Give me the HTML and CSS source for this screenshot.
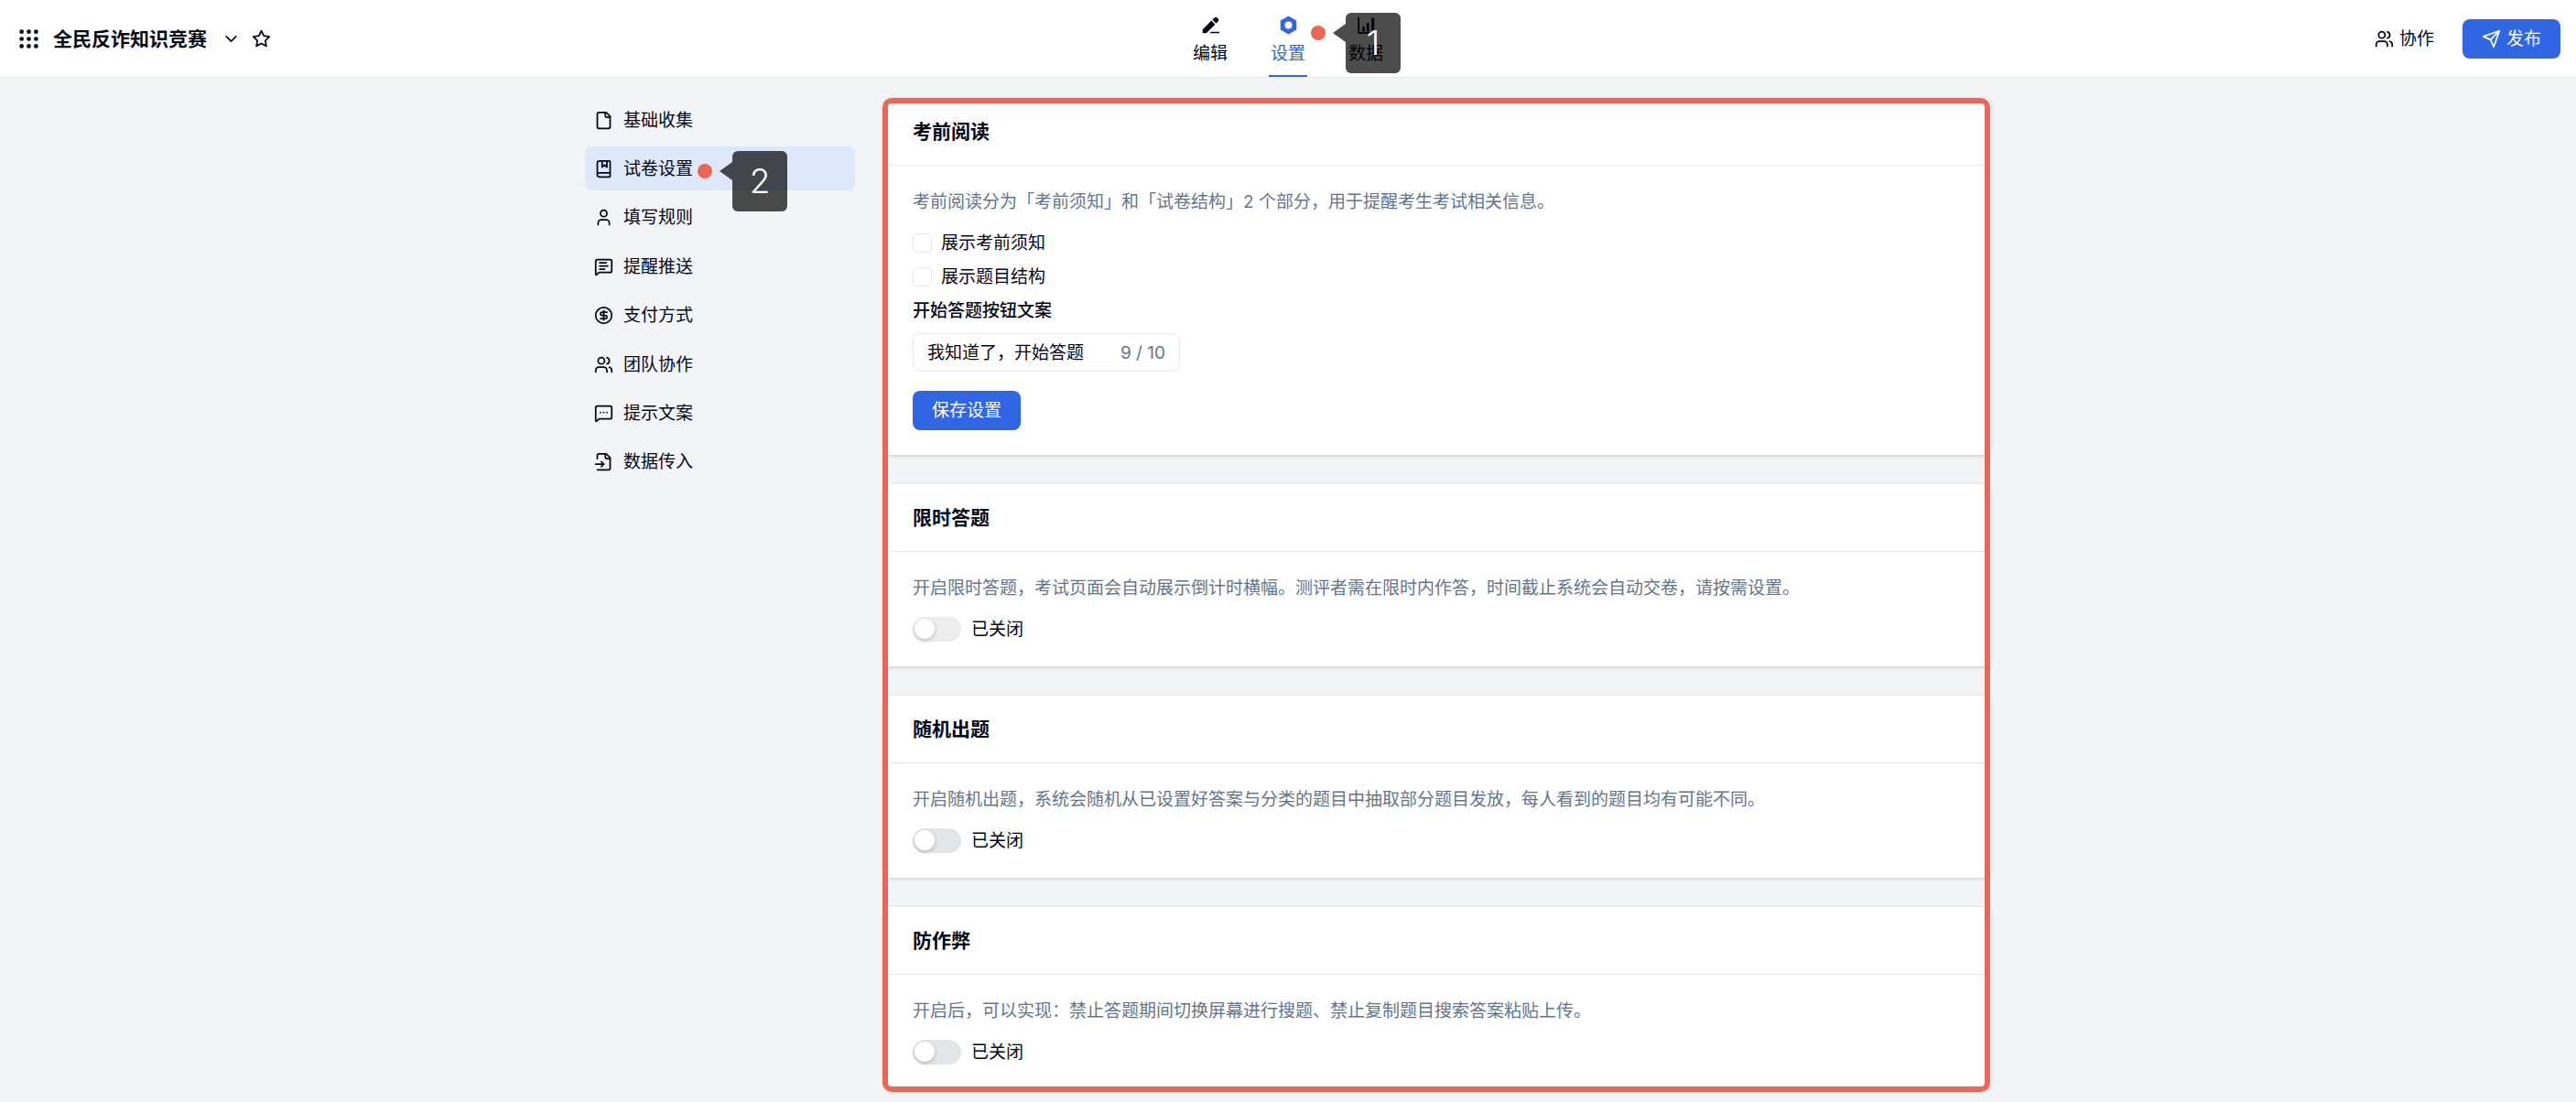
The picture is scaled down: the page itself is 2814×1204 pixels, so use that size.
FILE: index.html
```html
<!DOCTYPE html>
<html lang="zh-CN">
<head>
    <meta charset="UTF-8">
    <meta name="viewport" content="width=device-width, initial-scale=1.0">
    <title>全民反诈知识竞赛</title>
    <link rel="stylesheet" href="styles.css">
</head>
<body>
    <header class="topbar">
        <div class="form-info">
            <button class="icon-btn" type="button" aria-label="应用">
                <svg class="icon dots" viewBox="0 0 24 24">
                    <circle cx="3" cy="3" r="2.7"/><circle cx="12" cy="3" r="2.7"/><circle cx="21" cy="3" r="2.7"/>
                    <circle cx="3" cy="12" r="2.7"/><circle cx="12" cy="12" r="2.7"/><circle cx="21" cy="12" r="2.7"/>
                    <circle cx="3" cy="21" r="2.7"/><circle cx="12" cy="21" r="2.7"/><circle cx="21" cy="21" r="2.7"/>
                </svg>
            </button>
            <h1>全民反诈知识竞赛</h1>
            <button class="icon-btn" type="button" aria-label="展开">
                <svg class="icon" viewBox="0 0 24 24"><path d="m6 9 6 6 6-6"/></svg>
            </button>
            <button class="icon-btn" type="button" aria-label="收藏">
                <svg class="icon" viewBox="0 0 24 24"><path d="M12 2l3.09 6.26L22 9.27l-5 4.87 1.18 6.88L12 17.77l-6.18 3.25L7 14.14 2 9.27l6.91-1.01L12 2z"/></svg>
            </button>
        </div>

        <nav class="tabs">
            <a href="#edit" class="tab">
                <svg class="icon solid" viewBox="0 0 24 24">
                    <path d="M2 22v-4.6L13 6.4l4.6 4.6L6.6 22zM14.2 5.2l2.4-2.4a2.6 2.6 0 0 1 3.7 0l.9.9a2.6 2.6 0 0 1 0 3.7l-2.4 2.4zM12.5 20.2H23V22H10.7z"/>
                </svg>
                <span>编辑</span>
            </a>
            <a href="#settings" class="tab active">
                <svg class="icon solid" viewBox="0 0 24 24">
                    <path fill-rule="evenodd" d="M12 .6l10 5.7v11.4l-10 5.7-10-5.7V6.3zM12 7.4a4.6 4.6 0 1 0 0 9.2 4.6 4.6 0 0 0 0-9.2z"/>
                </svg>
                <span>设置</span>
                <span class="marker">
                    <span class="marker-dot"></span>
                    <span class="marker-label">1</span>
                </span>
            </a>
            <a href="#data" class="tab">
                <svg class="icon solid" viewBox="0 0 24 24">
                    <path d="M1.5 2h2v18.5H22v2H1.5zM7 14h3v6H7zM12.5 9h3v11h-3zM18.5 3h3.5v17h-3.5z"/>
                </svg>
                <span>数据</span>
            </a>
        </nav>

        <div class="actions">
            <button class="btn plain" type="button">
                <svg class="icon" viewBox="0 0 24 24"><path d="M16 21v-2a4 4 0 0 0-4-4H6a4 4 0 0 0-4 4v2"/><path d="M16 3.13a4 4 0 0 1 0 7.74"/><path d="M22 21v-2a4 4 0 0 0-3-3.87"/><circle cx="9" cy="7" r="4"/></svg>
                协作
            </button>
            <button class="btn primary" type="button">
                <svg class="icon" viewBox="0 0 24 24"><path d="m22 2-7 20-4-9-9-4Z"/><path d="M22 2 11 13"/></svg>
                发布
            </button>
        </div>
    </header>

    <main class="page">
        <aside>
            <nav class="side-menu">
                <a href="#basic">
                    <svg class="icon" viewBox="0 0 24 24"><path d="M15 2H6a2 2 0 0 0-2 2v16a2 2 0 0 0 2 2h12a2 2 0 0 0 2-2V7Z"/><path d="M14 2v4a2 2 0 0 0 2 2h4"/></svg>
                    <span>基础收集</span>
                </a>
                <a href="#exam" class="current">
                    <svg class="icon" viewBox="0 0 24 24"><path d="M10 2v8l3-3 3 3V2"/><path d="M4 19.5v-15A2.5 2.5 0 0 1 6.5 2H19a1 1 0 0 1 1 1v18a1 1 0 0 1-1 1H6.5a1 1 0 0 1 0-5H20"/></svg>
                    <span>试卷设置</span>
                    <span class="marker">
                        <span class="marker-dot"></span>
                        <span class="marker-label">2</span>
                    </span>
                </a>
                <a href="#rules">
                    <svg class="icon" viewBox="0 0 24 24"><path d="M19 21v-2a4 4 0 0 0-4-4H9a4 4 0 0 0-4 4v2"/><circle cx="12" cy="7" r="4"/></svg>
                    <span>填写规则</span>
                </a>
                <a href="#push">
                    <svg class="icon" viewBox="0 0 24 24"><path d="M22 17a2 2 0 0 1-2 2H6.83a2 2 0 0 0-1.42.59l-2.2 2.2A.71.71 0 0 1 2 21.29V5a2 2 0 0 1 2-2h16a2 2 0 0 1 2 2z"/><path d="M7 11h10M7 15h6M7 7h8"/></svg>
                    <span>提醒推送</span>
                </a>
                <a href="#pay">
                    <svg class="icon" viewBox="0 0 24 24"><circle cx="12" cy="12" r="10"/><path d="M16 8h-6a2 2 0 1 0 0 4h4a2 2 0 1 1 0 4H8"/><path d="M12 18V6"/></svg>
                    <span>支付方式</span>
                </a>
                <a href="#team">
                    <svg class="icon" viewBox="0 0 24 24"><path d="M16 21v-2a4 4 0 0 0-4-4H6a4 4 0 0 0-4 4v2"/><path d="M16 3.13a4 4 0 0 1 0 7.74"/><path d="M22 21v-2a4 4 0 0 0-3-3.87"/><circle cx="9" cy="7" r="4"/></svg>
                    <span>团队协作</span>
                </a>
                <a href="#tips">
                    <svg class="icon" viewBox="0 0 24 24"><path d="M22 17a2 2 0 0 1-2 2H6.83a2 2 0 0 0-1.42.59l-2.2 2.2A.71.71 0 0 1 2 21.29V5a2 2 0 0 1 2-2h16a2 2 0 0 1 2 2z"/><path d="M8 11h.01M12 11h.01M16 11h.01"/></svg>
                    <span>提示文案</span>
                </a>
                <a href="#import">
                    <svg class="icon" viewBox="0 0 24 24"><path d="M4 22h14a2 2 0 0 0 2-2V7l-5-5H6a2 2 0 0 0-2 2v4"/><path d="M14 2v4a2 2 0 0 0 2 2h4"/><path d="M2 15h10"/><path d="m9 18 3-3-3-3"/></svg>
                    <span>数据传入</span>
                </a>
            </nav>
        </aside>

        <div class="cards">
            <section class="card">
                <h2>考前阅读</h2>
                <form class="card-body">
                    <p>考前阅读分为「考前须知」和「试卷结构」2 个部分，用于提醒考生考试相关信息。</p>
                    <label class="check"><input type="checkbox">展示考前须知</label>
                    <label class="check"><input type="checkbox">展示题目结构</label>
                    <label class="field-label" for="startText">开始答题按钮文案</label>
                    <div class="text-field">
                        <input type="text" id="startText" maxlength="10" value="我知道了，开始答题">
                        <span>9 / 10</span>
                    </div>
                    <button class="btn primary" type="button">保存设置</button>
                </form>
            </section>

            <section class="card">
                <h2>限时答题</h2>
                <div class="card-body">
                    <p>开启限时答题，考试页面会自动展示倒计时横幅。测评者需在限时内作答，时间截止系统会自动交卷，请按需设置。</p>
                    <label class="switch light"><input type="checkbox" role="switch">已关闭</label>
                </div>
            </section>

            <section class="card">
                <h2>随机出题</h2>
                <div class="card-body">
                    <p>开启随机出题，系统会随机从已设置好答案与分类的题目中抽取部分题目发放，每人看到的题目均有可能不同。</p>
                    <label class="switch"><input type="checkbox" role="switch">已关闭</label>
                </div>
            </section>

            <section class="card">
                <h2>防作弊</h2>
                <div class="card-body">
                    <p>开启后，可以实现：禁止答题期间切换屏幕进行搜题、禁止复制题目搜索答案粘贴上传。</p>
                    <label class="switch"><input type="checkbox" role="switch">已关闭</label>
                </div>
            </section>

            <div class="highlight-frame"></div>
        </div>
    </main>
</body>
</html>
```

FILE: styles.css
```css
* {
    box-sizing: border-box;
}

body {
    margin: 0;
    background: #f2f4f6;
    color: #020617;
    font-family: Inter, "Noto Sans CJK SC", sans-serif;
    font-size: 19px;
    line-height: 27px;
}

a {
    color: inherit;
    text-decoration: none;
}

h1, h2, p {
    margin: 0;
}

h1, h2 {
    font-size: 21px;
    font-weight: 600;
}

button, input {
    font: inherit;
    color: inherit;
}

.icon {
    width: 21px;
    height: 21px;
    flex: none;
    fill: none;
    stroke: currentColor;
    stroke-width: 2;
    stroke-linecap: round;
    stroke-linejoin: round;
}

.icon.solid, .icon.dots {
    fill: currentColor;
    stroke: none;
}

.icon.dots {
    overflow: visible;
}

/* Top bar */
.topbar {
    display: grid;
    grid-template-columns: 1fr auto 1fr;
    height: 85px;
    padding: 0 17px;
    background: #fff;
    border-bottom: 1px solid #e5e7eb;
}

.form-info {
    display: flex;
    align-items: center;
    gap: 12px;
    padding-left: 4px;
}

.form-info h1 {
    margin: 0 4px;
}

.icon-btn {
    display: flex;
    padding: 0;
    border: 0;
    background: none;
}

.tabs {
    display: flex;
    gap: 43px;
}

.tab {
    position: relative;
    display: flex;
    flex-direction: column;
    align-items: center;
    gap: 7px;
    width: 42px;
    padding-top: 17px;
    white-space: nowrap;
}

.tab.active {
    color: #3066e4;
    border-bottom: 2px solid #3066e4;
}

.actions {
    display: flex;
    align-items: center;
    justify-content: flex-end;
    gap: 16px;
}

.btn {
    display: flex;
    align-items: center;
    gap: 6px;
    height: 43px;
    padding: 0 21px;
    border: 0;
    border-radius: 8px;
}

.btn.plain {
    padding: 0 15px;
    background: none;
}

.btn.primary {
    background: #3066e4;
    color: #fff;
}

/* Numbered guide markers, drawn over the page */
.marker {
    position: absolute;
    z-index: 2;
    display: flex;
    gap: 22px;
    color: #fff;
}

.tab .marker {
    top: 14px;
    left: 46px;
}

.side-menu .marker {
    top: 5px;
    left: 123px;
}

.marker-dot {
    width: 16px;
    height: 16px;
    margin-top: 14px;
    border-radius: 50%;
    background: #ea6757;
}

.marker-label {
    position: relative;
    width: 60px;
    border-radius: 6px;
    background: rgba(0, 0, 0, 0.7);
    font-size: 37px;
    font-weight: 300;
    line-height: 66px;
    text-align: center;
}

.marker-label::before {
    content: "";
    position: absolute;
    top: 12px;
    right: 100%;
    border: 10px solid transparent;
    border-left-width: 0;
    border-right: 14px solid rgba(0, 0, 0, 0.7);
}

/* Layout */
.page {
    display: grid;
    grid-template-columns: 295px 1fr;
    gap: 31px;
    max-width: 1536px;
    margin: 0 auto;
    padding: 22px 0 8px;
}

.side-menu {
    display: flex;
    flex-direction: column;
    justify-content: space-between;
    min-height: 422px;
}

.side-menu a {
    position: relative;
    display: flex;
    align-items: center;
    gap: 11px;
    height: 48px;
    padding: 0 10px;
    border-radius: 8px;
}

.side-menu .current {
    background: #dde8fb;
}

/* Cards */
.cards {
    position: relative;
    display: flex;
    flex-direction: column;
    gap: 32px;
}

.card {
    border-radius: 8px;
    background: #fff;
    box-shadow: 0 1px 4px rgba(0, 0, 0, 0.18);
}

.card h2 {
    padding: 23px 32px;
    border-bottom: 1px solid #e5e7eb;
}

.card-body {
    display: flex;
    flex-direction: column;
    align-items: flex-start;
    padding: 26px 32px 27px;
}

.card-body p {
    margin-bottom: 18px;
    color: #64748b;
}

.check {
    display: flex;
    align-items: center;
    gap: 10px;
    margin-bottom: 10px;
}

.check input {
    appearance: none;
    width: 21px;
    height: 21px;
    margin: 0;
    border: 1px solid #e5e7eb;
    border-radius: 5px;
}

.field-label {
    font-weight: 500;
}

.text-field {
    display: flex;
    align-items: center;
    width: 292px;
    height: 42px;
    margin: 11px 0 21px;
    padding: 0 15px;
    border: 1px solid #e5e7eb;
    border-radius: 8px;
}

.text-field input {
    flex: 1;
    min-width: 0;
    padding: 0;
    border: 0;
    outline: 0;
    background: none;
}

.text-field span {
    color: #64748b;
}

.switch {
    display: flex;
    align-items: center;
    gap: 11px;
}

.switch input {
    appearance: none;
    width: 53px;
    height: 27px;
    margin: 0;
    padding: 2px;
    border-radius: 14px;
    background: #e4e5e9;
}

.switch.light input {
    background: #ededef;
}

.switch input::before {
    content: "";
    display: block;
    width: 22px;
    height: 22px;
    border-radius: 50%;
    background: #fff;
    box-shadow: 0 2px 5px rgba(0, 0, 0, 0.2);
}

.highlight-frame {
    position: absolute;
    inset: 0 1px -3px -1px;
    border: 6px solid #ea6757;
    border-radius: 10px;
    pointer-events: none;
}
```
